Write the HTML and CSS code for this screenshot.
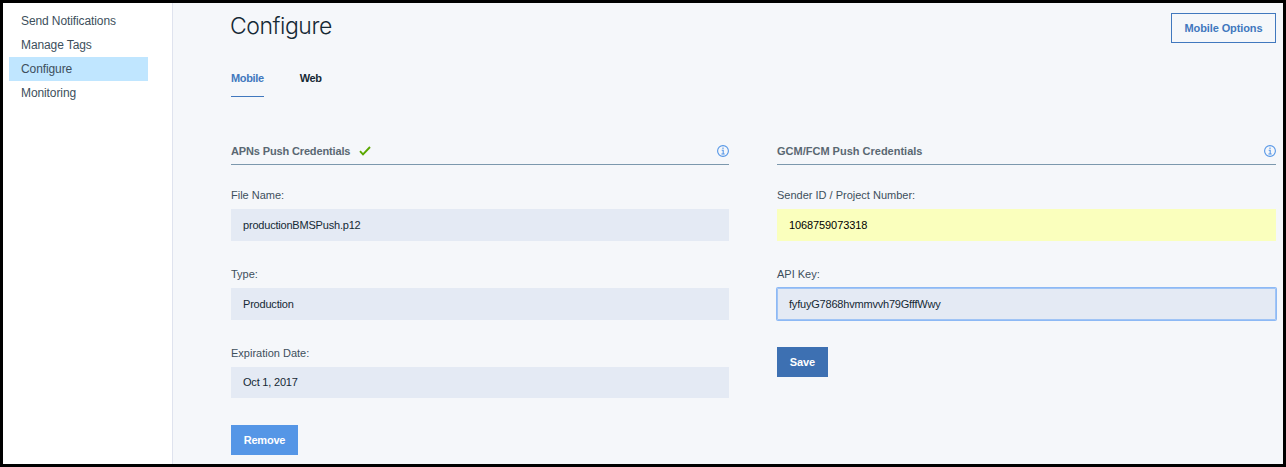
FILE: index.html
```html
<!DOCTYPE html>
<html lang="en">
<head>
<meta charset="utf-8">
<title>Configure</title>
<link rel="stylesheet" href="styles.css">
</head>
<body>
<div class="app">
  <nav class="sidebar">
    <a class="nav-item">Send Notifications</a>
    <a class="nav-item">Manage Tags</a>
    <a class="nav-item active">Configure</a>
    <a class="nav-item">Monitoring</a>
  </nav>
  <main class="main">
    <header class="top">
      <h1 class="title">Configure</h1>
      <button class="btn outline">Mobile Options</button>
    </header>
    <div class="tabs">
      <a class="tab selected">Mobile</a>
      <a class="tab">Web</a>
    </div>
    <div class="columns">
      <section class="panel">
        <div class="panel-head">
          <h2 class="panel-title tight">APNs Push Credentials</h2>
          <svg class="check" viewBox="0 0 12 10"><path d="M1 5.2 4 8.4 11 1"/></svg>
          <svg class="info" viewBox="0 0 12 12"><circle cx="6" cy="6" r="5.4"/><path d="M6 2.4v1.5M4.7 5.2H6.2V9M4.4 9h3.3"/></svg>
        </div>
        <div class="field"><label class="label">File Name:</label><div class="input">productionBMSPush.p12</div></div>
        <div class="field"><label class="label">Type:</label><div class="input">Production</div></div>
        <div class="field"><label class="label">Expiration Date:</label><div class="input short">Oct 1, 2017</div></div>
        <button class="btn remove">Remove</button>
      </section>
      <section class="panel">
        <div class="panel-head">
          <h2 class="panel-title">GCM/FCM Push Credentials</h2>
          <svg class="info" viewBox="0 0 12 12"><circle cx="6" cy="6" r="5.4"/><path d="M6 2.4v1.5M4.7 5.2H6.2V9M4.4 9h3.3"/></svg>
        </div>
        <div class="field"><label class="label">Sender ID / Project Number:</label><div class="input autofill">1068759073318</div></div>
        <div class="field"><label class="label">API Key:</label><div class="input focused">fyfuyG7868hvmmvvh79GfffWwy</div></div>
        <button class="btn save">Save</button>
      </section>
    </div>
  </main>
</div>
</body>
</html>
```
FILE: styles.css
```css
* { box-sizing: border-box; }
body {
  margin: 0;
  font-family: "Liberation Sans", Arial, sans-serif;
  font-size: 11px;
  color: #152935;
}
.app {
  display: flex;
  height: 467px;
  border: 3px solid #000;
  background: #f5f7fa;
  overflow: hidden;
}
.sidebar {
  width: 170px;
  padding: 6px 24px 0 6px;
  background: #fff;
  border-right: 1px solid #dfe3ee;
}
.nav-item {
  display: block;
  height: 24px;
  line-height: 24px;
  padding-left: 12px;
  font-size: 12px;
  letter-spacing: -0.1px;
  color: #3d4f5c;
  white-space: nowrap;
}
.nav-item.active { background: #c0e6ff; }
.main { flex: 1; padding: 10px 7px 0 58px; }
.top {
  display: flex;
  justify-content: space-between;
  align-items: flex-start;
  height: 55px;
}
.title {
  margin: 0 0 0 -1px;
  font-family: Inter, "Liberation Sans", sans-serif;
  font-size: 23px;
  font-weight: 300;
  line-height: 26px;
  letter-spacing: -0.45px;
}
.btn {
  height: 30px;
  padding: 0;
  border: 1px solid transparent;
  font: bold 11px "Liberation Sans", Arial, sans-serif;
  letter-spacing: -0.1px;
  color: #fff;
  white-space: nowrap;
}
.btn.outline {
  width: 105px;
  border-color: #4178be;
  background: none;
  color: #4178be;
}
.btn.remove { width: 67px; background: #5596e6; letter-spacing: -0.2px; }
.btn.save { width: 51px; background: #3d70b2; }
.tabs { display: flex; gap: 36px; height: 73px; }
.tab { height: 29px; line-height: 20px; font-weight: bold; letter-spacing: -0.35px; }
.tab.selected { color: #4178be; border-bottom: 1px solid #4178be; }
.columns { display: grid; grid-template-columns: 498px 499px; gap: 48px; }
.panel-head {
  display: flex;
  align-items: center;
  height: 24px;
  padding-bottom: 3px;
  margin-bottom: 21px;
  border-bottom: 1px solid #7c98ad;
}
.panel-title { margin: 0; font-size: 11px; line-height: 20px; color: #5a6872; }
.panel-title.tight { letter-spacing: -0.14px; }
.check {
  width: 12px;
  height: 10px;
  margin-left: 9px;
  fill: none;
  stroke: #5aa700;
  stroke-width: 1.9;
}
.info {
  width: 12px;
  height: 12px;
  margin-left: auto;
  fill: none;
  stroke: #5596e6;
  stroke-width: 1.1;
}
.field { margin-bottom: 24px; }
.label {
  display: block;
  height: 23px;
  line-height: 19px;
  color: #3d4f5c;
}
.input {
  height: 32px;
  line-height: 32px;
  padding-left: 12px;
  background: #e4eaf4;
  letter-spacing: -0.2px;
}
.input.short { height: 31px; line-height: 31px; }
.field:has(.short) { margin-bottom: 27px; }
.input.autofill { background: #faffbd; color: #000; letter-spacing: -0.1px; }
.input.focused {
  border-radius: 1px;
  box-shadow: 0 0 0 1px #8db9f5, inset 0 0 0 1px #a0c4f5;
}
.field:has(.focused) { margin-bottom: 27px; }
```
